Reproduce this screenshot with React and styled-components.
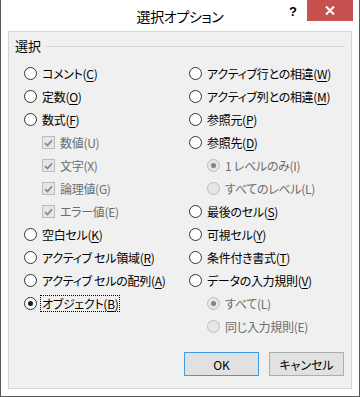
import styled, { createGlobalStyle } from "styled-components";

const GlobalStyle = createGlobalStyle`
  html, body {
    margin: 0;
    padding: 0;
    background: #ffffff;
  }
  body {
    font-family: "Noto Sans CJK JP", "Noto Sans", sans-serif;
    font-size: 12px;
    color: #000;
  }
`;

const leftItems = [
  { kind: "radio", label: "コメント", key: "C" },
  { kind: "radio", label: "定数", key: "O" },
  { kind: "radio", label: "数式", key: "F" },
  { kind: "check", label: "数値", key: "U", sub: true, disabled: true, checked: true },
  { kind: "check", label: "文字", key: "X", sub: true, disabled: true, checked: true },
  { kind: "check", label: "論理値", key: "G", sub: true, disabled: true, checked: true },
  { kind: "check", label: "エラー値", key: "E", sub: true, disabled: true, checked: true },
  { kind: "radio", label: "空白セル", key: "K" },
  { kind: "radio", label: "アクティブ セル領域", key: "R" },
  { kind: "radio", label: "アクティブ セルの配列", key: "A" },
  { kind: "radio", label: "オブジェクト", key: "B", checked: true, focused: true },
];

const rightItems = [
  { kind: "radio", label: "アクティブ行との相違", key: "W" },
  { kind: "radio", label: "アクティブ列との相違", key: "M" },
  { kind: "radio", label: "参照元", key: "P" },
  { kind: "radio", label: "参照先", key: "D" },
  { kind: "radio", label: "1 レベルのみ", key: "I", sub: true, disabled: true, checked: true },
  { kind: "radio", label: "すべてのレベル", key: "L", sub: true, disabled: true },
  { kind: "radio", label: "最後のセル", key: "S" },
  { kind: "radio", label: "可視セル", key: "Y" },
  { kind: "radio", label: "条件付き書式", key: "T" },
  { kind: "radio", label: "データの入力規則", key: "V" },
  { kind: "radio", label: "すべて", key: "L", sub: true, disabled: true, checked: true },
  { kind: "radio", label: "同じ入力規則", key: "E", sub: true, disabled: true },
];

function Option({ item }) {
  const { kind, label, key, sub, disabled, checked, focused } = item;
  return (
    <Row $sub={sub}>
      {kind === "radio" ? (
        <Radio $disabled={disabled} $checked={checked} />
      ) : (
        <CheckBox $disabled={disabled}>
          {checked && (
            <svg width="9" height="8" viewBox="0 0 9 8">
              <path d="M1 4.2 L3.4 6.5 L8 1.3" fill="none" stroke="#8a8a8a" strokeWidth="1.8" />
            </svg>
          )}
        </CheckBox>
      )}
      <Label $disabled={disabled} $focused={focused}>
        {label}(
        {disabled ? key : <u>{key}</u>})
      </Label>
    </Row>
  );
}

export default function App() {
  return (
    <>
      <GlobalStyle />
      <Window>
        <TitleBar>
          <Title>選択オプション</Title>
          <Help>?</Help>
          <CloseButton>
            <svg width="10" height="9" viewBox="0 0 10 9">
              <path d="M1 0.5 L9 8.5 M9 0.5 L1 8.5" stroke="#fff" strokeWidth="2" />
            </svg>
          </CloseButton>
        </TitleBar>
        <Panel>
          <GroupHeader>
            <span>選択</span>
            <GroupLine />
          </GroupHeader>
          <Columns>
            <Column>
              {leftItems.map((it, i) => (
                <Option key={i} item={it} />
              ))}
            </Column>
            <Column>
              {rightItems.map((it, i) => (
                <Option key={i} item={it} />
              ))}
            </Column>
          </Columns>
          <Buttons>
            <Button $default>OK</Button>
            <Button>キャンセル</Button>
          </Buttons>
        </Panel>
      </Window>
    </>
  );
}

const Window = styled.div`
  width: 360px;
  height: 397px;
  box-sizing: border-box;
  border: 1px solid #5a5a5a;
  border-top: none;
  background: #ffffff;
  display: flex;
  flex-direction: column;
`;

const TitleBar = styled.div`
  position: relative;
  height: 31px;
  flex: none;
  display: flex;
  align-items: center;
  justify-content: center;
`;

const Title = styled.div`
  font-size: 14px;
  letter-spacing: -0.4px;
  font-feature-settings: "palt";
  color: #000;
  margin-top: 1px;
`;

const Help = styled.div`
  position: absolute;
  left: 288px;
  top: 4px;
  font-family: "Liberation Sans", Arial, sans-serif;
  font-weight: bold;
  font-size: 13px;
  color: #000;
`;

const CloseButton = styled.div`
  position: absolute;
  left: 306px;
  top: 0;
  width: 46px;
  height: 21px;
  background: #c75050;
  display: flex;
  align-items: center;
  justify-content: center;
`;

const Panel = styled.div`
  flex: 1;
  margin: 0 7px 7px;
  border: 1px solid #d5d5d5;
  background: #f0f0f0;
  padding: 0 6px 12px;
  display: flex;
  flex-direction: column;
`;

const GroupHeader = styled.div`
  display: flex;
  align-items: center;
  height: 16px;
  margin-top: 5px;
  margin-bottom: 9px;
  font-feature-settings: "palt";
  font-size: 13px;
`;

const GroupLine = styled.div`
  flex: 1;
  height: 1px;
  background: #d5d5d5;
  margin-left: 5px;
  margin-top: 2px;
`;

const Columns = styled.div`
  display: grid;
  grid-template-columns: 165px 1fr;
  padding-left: 9px;
`;

const Column = styled.div`
  display: flex;
  flex-direction: column;
`;

const Row = styled.div`
  height: 23px;
  display: flex;
  align-items: center;
  padding-left: ${(p) => (p.$sub ? "18px" : "0")};
`;

const Radio = styled.span`
  position: relative;
  box-sizing: border-box;
  width: 13px;
  height: 13px;
  flex: none;
  border-radius: 50%;
  border: 1px solid ${(p) => (p.$disabled ? "#bcbcbc" : "#333333")};
  background: ${(p) => (p.$disabled ? "#e6e6e6" : "#ffffff")};
  margin-right: 4px;

  &::after {
    content: "";
    display: ${(p) => (p.$checked ? "block" : "none")};
    position: absolute;
    left: 3px;
    top: 3px;
    width: 5px;
    height: 5px;
    border-radius: 50%;
    background: ${(p) => (p.$disabled ? "#838383" : "#1a1a1a")};
  }
`;

const CheckBox = styled.span`
  box-sizing: border-box;
  width: 13px;
  height: 13px;
  flex: none;
  border: 1px solid ${(p) => (p.$disabled ? "#bcbcbc" : "#333333")};
  background: ${(p) => (p.$disabled ? "#e6e6e6" : "#ffffff")};
  margin-right: 4px;
  display: flex;
  align-items: center;
  justify-content: center;
`;

const Label = styled.span`
  font-feature-settings: "palt";
  letter-spacing: -0.3px;
  white-space: nowrap;
  color: ${(p) => (p.$disabled ? "#6d6d6d" : "#000000")};
  line-height: 15px;
  padding: 0 1px;
  outline: ${(p) => (p.$focused ? "1px dotted #000" : "none")};
  outline-offset: 0;

  u {
    text-decoration-thickness: 1px;
    text-underline-offset: 2px;
  }
`;

const Buttons = styled.div`
  margin-top: auto;
  display: flex;
  justify-content: flex-end;
  gap: 10px;
  padding-right: 1px;
`;

const Button = styled.div`
  box-sizing: border-box;
  width: 75px;
  height: 24px;
  display: flex;
  align-items: center;
  justify-content: center;
  font-feature-settings: "palt";
  background: #e1e1e1;
  border: 1px solid ${(p) => (p.$default ? "#3c9be5" : "#adadad")};
  color: #000;
`;
